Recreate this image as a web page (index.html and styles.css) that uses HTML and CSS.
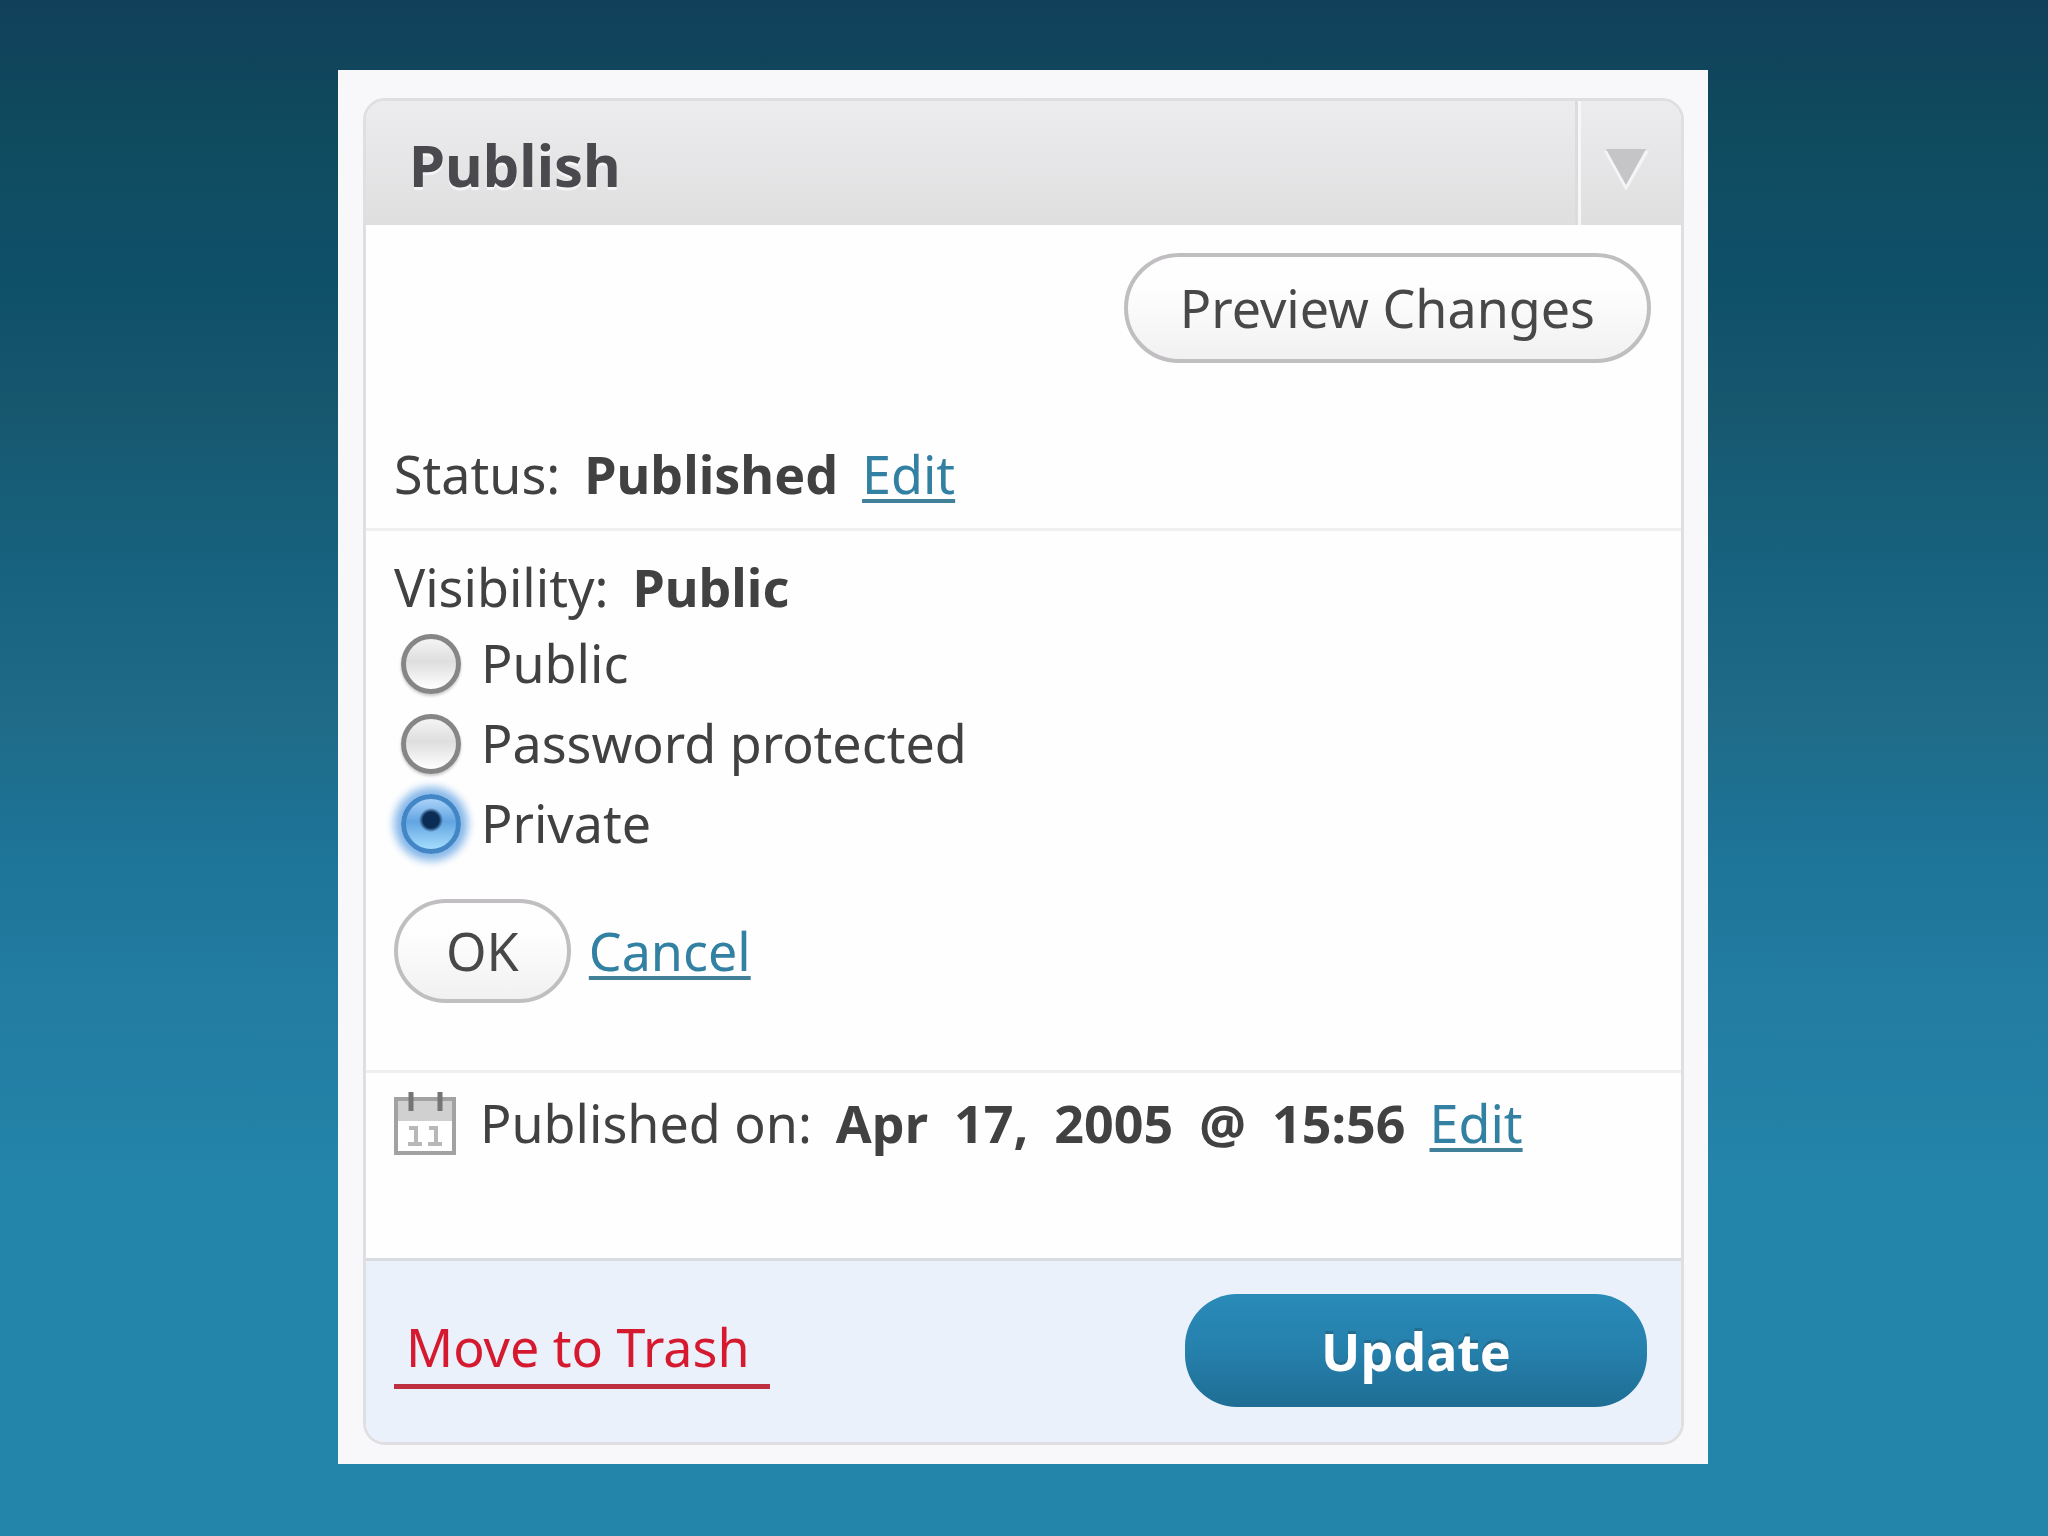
FILE: index.html
```html
<!DOCTYPE html>
<html lang="en">
<head>
<meta charset="utf-8">
<meta name="viewport" content="width=device-width, initial-scale=1">
<title>Publish</title>
<link rel="stylesheet" href="styles.css">
</head>
<body class="page">
<main class="frame">
  <form class="postbox">
    <header class="postbox-header">
      <h2 class="postbox-title">Publish</h2>
      <button class="toggle" type="button" aria-label="Toggle panel">
        <svg class="toggle-arrow" viewBox="0 0 46 46" aria-hidden="true">
          <path d="M1 5H46L23 45Z" fill="#f5f5f6"/>
          <path d="M3 3H43L23 39Z" fill="#c5c5c7"/>
        </svg>
      </button>
    </header>

    <div class="preview-row">
      <button class="button button-preview" type="button">Preview Changes</button>
    </div>

    <section class="section status">
      <div class="line">
        <span>Status:</span>
        <strong>Published</strong>
        <a class="link" href="#status">Edit</a>
      </div>
    </section>

    <section class="section visibility">
      <div class="line visibility-current">
        <span>Visibility:</span>
        <strong>Public</strong>
      </div>
      <div class="options">
        <label class="option"><input class="radio" type="radio" name="visibility" value="public">Public</label>
        <label class="option"><input class="radio" type="radio" name="visibility" value="password">Password protected</label>
        <label class="option"><input class="radio" type="radio" name="visibility" value="private" checked>Private</label>
      </div>
      <div class="actions">
        <button class="button button-ok" type="button">OK</button>
        <a class="link" href="#cancel">Cancel</a>
      </div>
    </section>

    <section class="section published">
      <svg class="calendar" viewBox="0 0 62 64" aria-hidden="true">
        <rect x="2" y="8" width="58" height="54" fill="#fff" stroke="#a2a2a2" stroke-width="4"/>
        <path d="M4 9H58V30H4Z" fill="#d0d0d0"/>
        <path d="M0 8H62" stroke="#a2a2a2" stroke-width="4"/>
        <path d="M17 1V20M46 1V20" stroke="#757575" stroke-width="5"/>
        <path d="M15 37H22V52M14 53H28M35 37H42V52M34 53H48" fill="none" stroke="#b8b8b8" stroke-width="4"/>
      </svg>
      <div class="line">
        <span>Published on:</span>
        <strong class="date">
          <span>Apr</span>
          <span>17,</span>
          <span>2005</span>
          <span>@</span>
          <span>15:56</span>
        </strong>
        <a class="link" href="#date">Edit</a>
      </div>
    </section>

    <footer class="postbox-footer">
      <a class="trash" href="#trash">Move to Trash</a>
      <button class="update" type="submit">Update</button>
    </footer>
  </form>
</main>
</body>
</html>
```
FILE: styles.css
```css
* {
  box-sizing: border-box;
}

.page {
  margin: 0;
  padding: 70px 340px 72px 338px;
  min-height: 100vh;
  background: #2485aa linear-gradient(#11405a 0%, #0f4b5f 9%, #0f5069 18%, #17586f 27%, #17627f 37%, #1f6b88 47%, #1d7599 56%, #237ca2 65%, #2485aa 78%, #2485aa 100%);
  color: #414141;
  font-family: "Noto Sans", "Open Sans", sans-serif;
  font-size: 52px;
  line-height: 80px;
}

.frame {
  padding: 28px 24px 19px 25px;
  background: #f8f8fa;
}

.postbox {
  overflow: hidden;
  border: 3px solid #dfdfe2;
  border-radius: 22px;
  background: #fefefe;
}

.postbox-header {
  display: flex;
  justify-content: space-between;
  height: 124px;
  background: linear-gradient(#ececee, #dfdfe0);
}

.postbox-title {
  margin: 0;
  padding: 4px 0 0 43px;
  color: #4a4a4e;
  font-size: 58px;
  line-height: 120px;
  text-shadow: 0 3px 0 #f4f4f4;
}

.toggle {
  display: flex;
  align-items: center;
  justify-content: center;
  width: 106px;
  padding: 12px 8px 0 0;
  border: 0;
  border-left: 3px solid #dcdcde;
  background: none;
  box-shadow: inset 3px 0 0 #f7f7f8;
}

.toggle-arrow {
  width: 46px;
  height: 46px;
}

.preview-row {
  display: flex;
  justify-content: flex-end;
  padding: 28px 30px 0;
}

.button {
  border: 4px solid #c0bec0;
  border-radius: 56px;
  background: linear-gradient(#fefefe 30%, #f1f1f2);
  color: #484848;
  font: inherit;
}

.button-preview {
  height: 110px;
  padding: 0 52px;
}

.section {
  padding-right: 28px;
  padding-left: 28px;
}

.line {
  display: flex;
  flex-wrap: wrap;
  column-gap: 24px;
}

.status {
  padding-top: 71px;
  padding-bottom: 14px;
}

.visibility {
  padding-top: 20px;
  padding-bottom: 67px;
  border-top: 3px solid #f0eff0;
  border-bottom: 3px solid #f0eff0;
}

.visibility-current {
  line-height: 72px;
}

.options {
  display: flex;
  flex-direction: column;
  align-items: flex-start;
}

.option {
  display: flex;
  align-items: center;
  gap: 20px;
}

.radio {
  appearance: none;
  width: 60px;
  height: 60px;
  margin: 2px 0 0 7px;
  border: 5px solid #868686;
  border-radius: 50%;
  background: linear-gradient(#f4f4f4, #dededf 45%, #fff);
  box-shadow: 0 2px 3px #c8c8c8;
}

.radio:checked {
  border-color: #4286c6;
  background: radial-gradient(circle at 50% 42%, #0b2c55 0 8px, transparent 12px), linear-gradient(#a9d2f8, #62a5e2 45%, #a4dcfc);
  box-shadow: 0 0 8px 7px #85b7ea;
}

.actions {
  display: flex;
  align-items: center;
  gap: 18px;
  margin-top: 36px;
}

.button-ok {
  height: 104px;
  padding: 0 48px;
}

.link {
  color: #3280a2;
  text-decoration: underline;
  text-decoration-color: #427f98;
  text-decoration-thickness: 4px;
  text-decoration-skip-ink: none;
  text-underline-offset: 5px;
}

.published {
  display: flex;
  align-items: center;
  gap: 24px;
  padding-top: 10px;
  padding-bottom: 95px;
}

.date {
  display: flex;
  column-gap: 26px;
}

.calendar {
  flex: none;
  width: 62px;
  height: 64px;
}

.postbox-footer {
  display: flex;
  align-items: center;
  justify-content: space-between;
  padding: 33px 34px 35px 28px;
  border-top: 3px solid #d8dce2;
  background: #eaf1fa;
}

.trash {
  padding: 0 20px 2px 12px;
  border-bottom: 5px solid #bd3040;
  color: #d51a30;
  line-height: 70px;
  text-decoration: none;
}

.update {
  width: 462px;
  height: 113px;
  padding: 0;
  border: 0;
  border-radius: 52px;
  background: linear-gradient(#2a8ab8, #2580ac 50%, #1f6d93);
  color: #fff;
  font: inherit;
  font-weight: 700;
  text-shadow: 0 -3px 0 #256d90;
}
```
